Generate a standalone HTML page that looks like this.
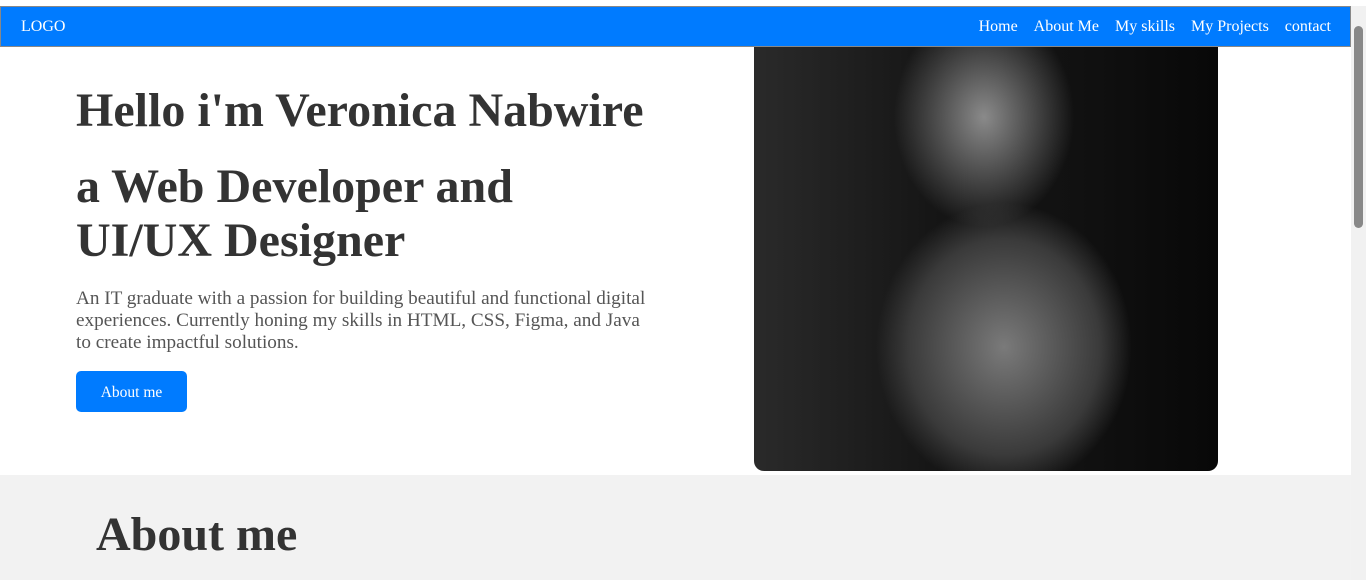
<!DOCTYPE html>
<html><head><meta charset="utf-8"><style>
*{margin:0;padding:0;box-sizing:border-box}
html,body{width:1366px;height:580px;overflow:hidden;background:#fff;font-family:"Liberation Serif",serif}
.nav{position:absolute;top:6px;left:0;width:1351px;height:41px;background:#007bff;border:1px solid #888;color:#fff;font-size:16px}
.nav .logo{position:absolute;left:20px;top:11px}
.nav .links{position:absolute;right:19px;top:11px;display:flex;gap:16px}
h1{position:absolute;left:76px;font-size:48px;font-weight:bold;color:#333;line-height:54px;white-space:nowrap}
p.d{position:absolute;left:76px;top:288px;width:575px;font-size:19.2px;line-height:22px;color:#555}
.btn{position:absolute;left:76px;top:371px;width:111px;height:41px;background:#007bff;border-radius:5px;color:#fff;font-size:15.5px;text-align:center;line-height:43px}
.photo{position:absolute;left:754px;top:47px;width:464px;height:424px;border-radius:0 0 10px 10px;
background:radial-gradient(ellipse 90px 110px at 230px 70px,#8a8a8a,transparent),radial-gradient(ellipse 160px 180px at 250px 300px,#7a7a7a,#3a3a3a 60%,transparent 80%),linear-gradient(90deg,#2a2a2a,#151515 40%,#111 70%,#080808)}
.about{position:absolute;left:0;top:475px;width:1351px;height:105px;background:#f2f2f2}
.about h2{position:absolute;left:96px;top:33px;font-size:48px;color:#333;line-height:54px}
.sb{position:absolute;right:0;top:6px;width:15px;height:574px;background:#f1f1f1}
.sb .th{position:absolute;left:3px;top:20px;width:9px;height:202px;background:#888;border-radius:5px}
</style></head><body>
<div class="nav"><span class="logo">LOGO</span><div class="links"><span>Home</span><span>About Me</span><span>My skills</span><span>My Projects</span><span>contact</span></div></div>
<h1 style="top:84px">Hello i'm Veronica Nabwire</h1>
<h1 style="top:160px">a Web Developer and<br>UI/UX Designer</h1>
<p class="d">An IT graduate with a passion for building beautiful and functional digital experiences. Currently honing my skills in HTML, CSS, Figma, and Java to create impactful solutions.</p>
<div class="btn">About me</div>
<div class="photo"></div>
<div class="about"><h2>About me</h2></div>
<div class="sb"><div class="th"></div></div>
</body></html>
